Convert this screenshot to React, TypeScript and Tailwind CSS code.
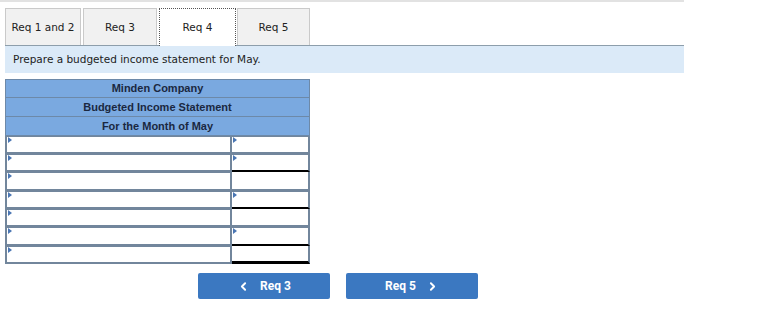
import React from 'react'
import { ChevronLeft, ChevronRight } from 'lucide-react'

const tabs = [
  { label: 'Req 1 and 2', w: 'w-[76px]', ml: 'ml-[5px]', active: false },
  { label: 'Req 3', w: 'w-[74px]', ml: 'ml-[2px]', active: false },
  { label: 'Req 4', w: 'w-[77px]', ml: 'ml-[2px]', active: true },
  { label: 'Req 5', w: 'w-[73px]', ml: 'ml-[1px]', active: false },
]

// right cell: input = has marker, under = black underline
const rows = [
  { h: 'h-[18px]', input: true, under: false },
  { h: 'h-[18px]', input: true, under: true },
  { h: 'h-[19px]', input: false, under: false },
  { h: 'h-[18px]', input: true, under: true },
  { h: 'h-[18px]', input: false, under: false },
  { h: 'h-[19px]', input: true, under: true },
  { h: 'h-[18px]', input: false, under: false, double: true },
]

function Marker() {
  return (
    <span className="absolute left-[1px] top-0 w-0 h-0 border-t-[3px] border-b-[3px] border-l-[4px] border-t-transparent border-b-transparent border-l-[#4a76b3]" />
  )
}

export default function App() {
  return (
    <div className="w-[784px] h-[321px] bg-white overflow-hidden font-['DejaVu_Sans',Verdana,sans-serif]">
      <div className="h-[2px] w-[684px] bg-[#e2e2e2]" />

      {/* tabs */}
      <div className="flex mt-[6px] h-[37px]">
        {tabs.map((t) => (
          <div
            key={t.label}
            className={
              t.ml + ' ' + t.w + ' flex items-center justify-center pt-[1px] text-[10.5px] text-[#222] ' +
              (t.active
                ? 'bg-white border border-dotted border-[#555] border-b-0 h-[38px] relative z-10'
                : 'bg-[#f1f1f1] border border-[#cacaca] border-b-0')
            }
          >
            {t.label}
          </div>
        ))}
      </div>

      {/* prompt */}
      <div className="ml-[5px] w-[679px] h-[28px] bg-[#dbeaf8] border-t border-[#8d9eab] flex items-center pl-[8px] pt-[1px] text-[10.5px] text-[#222]">
        Prepare a budgeted income statement for May.
      </div>

      {/* statement */}
      <div className="ml-[5px] mt-[6px] w-[305px] font-['Liberation_Sans',Arial,sans-serif]">
        {['Minden Company', 'Budgeted Income Statement', 'For the Month of May'].map((t, i) => (
          <div
            key={t}
            className={
              'flex items-center justify-center bg-[#7aa9e0] border-x border-t border-[#6d89a8] text-[11px] font-bold text-[#1a2840] ' +
              (i === 0 ? 'h-[18px]' : 'h-[19px]')
            }
          >
            {t}
          </div>
        ))}
        <div className="border-t border-[#6d89a8]">
          {rows.map((r, i) => (
            <div key={i} className={'flex ' + r.h}>
              <div className="relative w-[227px] border-x-2 border-t border-b-2 border-[#72869c] bg-white">
                <Marker />
              </div>
              <div
                className={
                  'relative w-[78px] bg-white border-r-2 border-[#72869c] ' +
                  (r.input ? 'border-t ' : '') +
                  (r.double
                    ? 'border-b-[3px] border-b-black'
                    : r.under
                    ? 'border-b-2 border-b-black'
                    : 'border-b-2')
                }
              >
                {r.input && <Marker />}
              </div>
            </div>
          ))}
        </div>
      </div>

      {/* nav buttons */}
      <div className="flex ml-[198px] mt-[9px] gap-[16px] font-['Roboto',sans-serif]">
        <button className="w-[132px] h-[26px] bg-[#3b78c1] rounded-[2px] flex items-center justify-center gap-[10px] text-white text-[12px] font-bold">
          <ChevronLeft size={13} strokeWidth={3.5} />
          <span>Req 3</span>
        </button>
        <button className="w-[132px] h-[26px] bg-[#3b78c1] rounded-[2px] flex items-center justify-center gap-[10px] text-white text-[12px] font-bold">
          <span>Req 5</span>
          <ChevronRight size={13} strokeWidth={3.5} />
        </button>
      </div>
    </div>
  )
}
